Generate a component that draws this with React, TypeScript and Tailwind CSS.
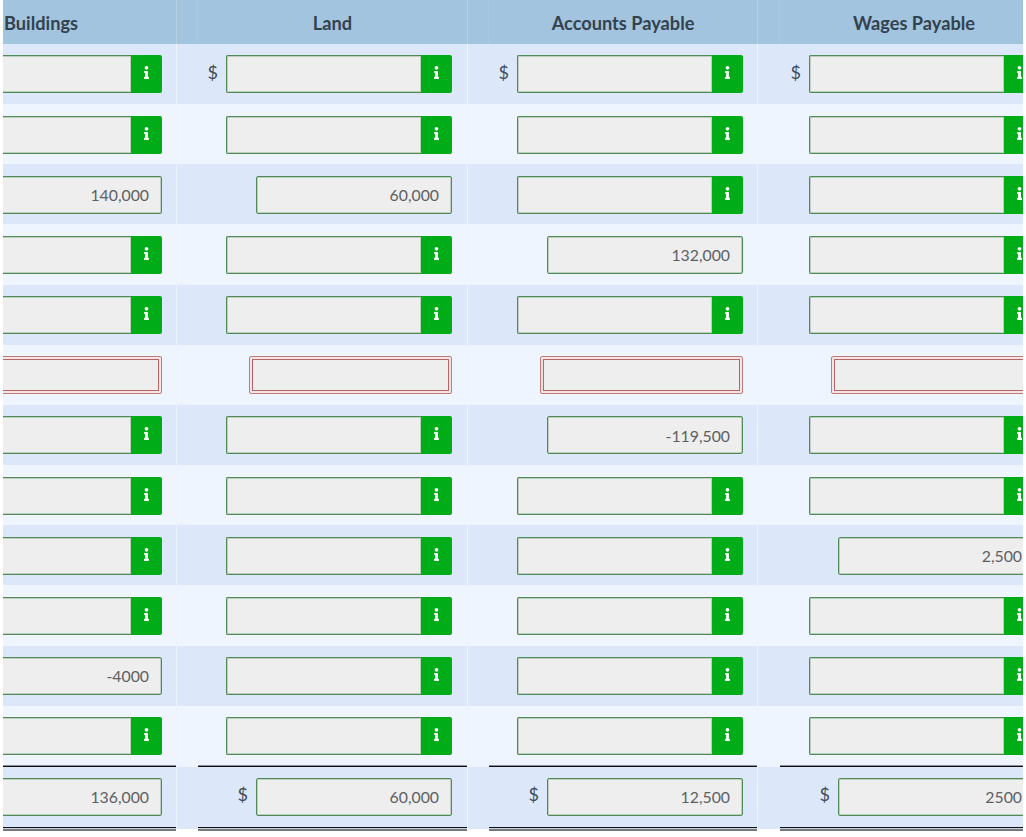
import React from 'react';
import { FaInfo } from 'react-icons/fa';

type Cell = { value?: string; dollar?: boolean };

const headers = ['Buildings', 'Land', 'Accounts Payable', 'Wages Payable'];

const rows: Cell[][] = [
  [{}, { dollar: true }, { dollar: true }, { dollar: true }],
  [{}, {}, {}, {}],
  [{ value: '140,000' }, { value: '60,000' }, {}, {}],
  [{}, {}, { value: '132,000' }, {}],
  [{}, {}, {}, {}],
  [{}, {}, {}, {}],
  [{}, {}, { value: '-119,500' }, {}],
  [{}, {}, {}, {}],
  [{}, {}, {}, { value: '2,500' }],
  [{}, {}, {}, {}],
  [{ value: '-4000' }, {}, {}, {}],
  [{}, {}, {}, {}],
];

const totals = ['136,000', '60,000', '12,500', '2500'];

// first column is cut off on the left, last one on the right
const colWidth = ['w-[173px]', 'w-[269px]', 'w-[268px]', 'w-[268px]'];
const colPad = ['pr-[14px]', 'pr-[15px]', 'pr-[14px]', 'pr-[13px]'];
const spacers = ['w-[22px]', 'w-[22px]', 'w-[23px]'];

const boxBorder = 'border border-[#4f8a57] shadow-[inset_0_0_0_1px_#bdd0c0]';

function EmptyInput() {
  return (
    <div className="flex h-[38px] w-[226px] shrink-0">
      <div className={`flex-1 rounded-l-[2px] border-r-0 bg-[#eeeeee] ${boxBorder}`} />
      <div className="flex w-[31px] items-center justify-center rounded-r-[2px] bg-[#00ac17] pr-[1px] pb-[3px] text-white">
        <FaInfo className="h-[13px] w-[13px]" />
      </div>
    </div>
  );
}

function ValueInput({ value, col }: { value: string; col: number }) {
  return (
    <div
      className={`flex h-[38px] shrink-0 items-center justify-end rounded-[2px] bg-[#eeeeee] pr-[12px] text-[15.8px] text-[#5b6064] ${boxBorder} ${col === 3 ? 'w-[197px]' : 'w-[196px]'}`}
    >
      {value}
    </div>
  );
}

function ErrorInput({ col }: { col: number }) {
  return (
    <div
      className={`flex h-[38px] shrink-0 rounded-[2px] border border-[#c07a7a] bg-[#f3e4e6] p-[2px] ${col === 3 ? 'w-[204px]' : 'w-[203px]'}`}
    >
      <div className="flex-1 border border-[#b96464] bg-[#eeeeee]" />
    </div>
  );
}

function Dollar() {
  return <span className="mr-[8px] mb-[4px] text-[18px] text-[#3d4c5c]">$</span>;
}

export default function App() {
  return (
    <div className="h-[837px] w-[1026px] overflow-hidden bg-white px-[3px] font-['Lato',sans-serif]">
      <div className="w-[1020px] overflow-hidden">
        <div className="flex h-[44px] bg-[#a2c4de] text-[18.2px] font-bold text-[#33424f]">
          {headers.map((h, i) => (
            <React.Fragment key={h}>
              <div
                className={`flex shrink-0 items-center pt-[3px] ${colWidth[i]} ${i === 0 ? 'justify-start pl-[1px]' : 'justify-center'}`}
              >
                {h}
              </div>
              {i < 3 && (
                <div className={`shrink-0 border-r border-l border-r-[#a9c9e1] border-l-[#b5d0e5] ${spacers[i]}`} />
              )}
            </React.Fragment>
          ))}
        </div>

        {rows.map((row, r) => (
          <div key={r} className={`flex h-[60.17px] ${r % 2 === 0 ? 'bg-[#dce8f9]' : 'bg-[#eef5ff]'}`}>
            {row.map((cell, c) => (
              <React.Fragment key={c}>
                <div className={`flex shrink-0 items-center justify-end overflow-hidden pt-[0.8px] ${colWidth[c]} ${colPad[c]}`}>
                  {cell.dollar && <Dollar />}
                  {r === 5 ? (
                    <ErrorInput col={c} />
                  ) : cell.value ? (
                    <ValueInput value={cell.value} col={c} />
                  ) : (
                    <EmptyInput />
                  )}
                </div>
                {c < 3 && <div className={`shrink-0 border-l border-[#edf3fc] ${spacers[c]}`} />}
              </React.Fragment>
            ))}
          </div>
        ))}

        <div className="-mt-[1px] flex items-start">
          {totals.map((t, c) => (
            <React.Fragment key={t}>
              <div className={`flex h-[66px] shrink-0 flex-col ${colWidth[c]}`}>
                <div className="h-px bg-[#8c9096]" />
                <div className="h-px bg-[#111111]" />
                <div className={`flex flex-1 items-center justify-end overflow-hidden bg-[#dce8f9] ${colPad[c]}`}>
                  {c > 0 && <Dollar />}
                  <ValueInput value={t} col={c} />
                </div>
                <div className="h-px bg-[#111111]" />
                <div className="h-px bg-[#c9d2de]" />
                <div className="h-[2px] bg-[#77797c]" />
              </div>
              {c < 3 && (
                <div className={`h-[64px] shrink-0 border-t-2 border-l border-t-[#eef5ff] border-l-[#edf3fc] bg-[#dce8f9] ${spacers[c]}`} />
              )}
            </React.Fragment>
          ))}
        </div>
      </div>
    </div>
  );
}
